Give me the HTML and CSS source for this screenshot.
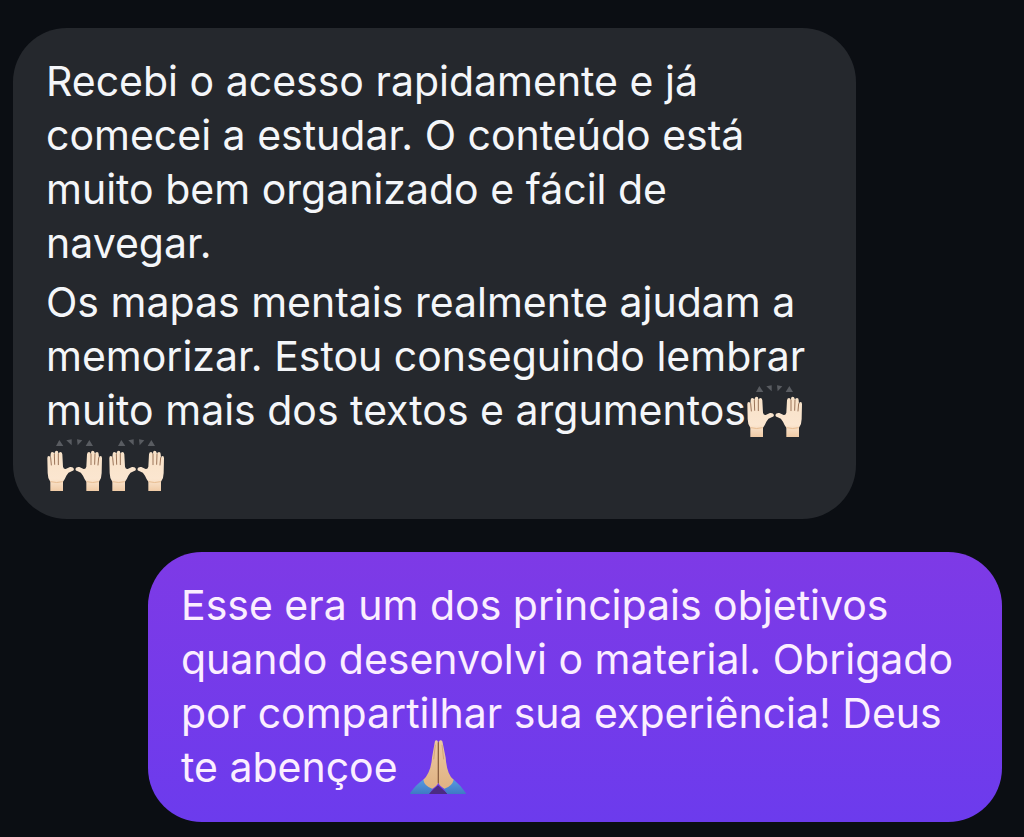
FILE: index.html
```html
<!DOCTYPE html>
<html lang="pt-BR">
<head>
<meta charset="utf-8">
<meta name="viewport" content="width=device-width, initial-scale=1">
<title>Conversa</title>
<link rel="stylesheet" href="styles.css">
</head>
<body>
<svg class="defs" aria-hidden="true">
  <defs>
    <linearGradient id="skin" x1="0" y1="0" x2="0" y2="1">
      <stop offset="0" stop-color="#f8e2c8"/>
      <stop offset=".7" stop-color="#fbe6d0"/>
      <stop offset="1" stop-color="#f0cba6"/>
    </linearGradient>
    <linearGradient id="palm" x1="0" y1="0" x2="0" y2="1">
      <stop offset="0" stop-color="#ecc8a0"/>
      <stop offset="1" stop-color="#dfb283"/>
    </linearGradient>
    <linearGradient id="sleeve" x1="0" y1="0" x2="0" y2="1">
      <stop offset="0" stop-color="#579be0"/>
      <stop offset="1" stop-color="#3f79c4"/>
    </linearGradient>
    <g id="hand">
      <path fill="url(#skin)" d="M46 186 L46 158 Q38 148 38 132 L37 88 Q37 81 41 81 Q46 81 46 88 L47 75 Q47 69 52 69 Q57 69 58 75 L59 71 Q60 65 65 65 Q70 65 70 72 L71 75 Q72 69 76 69 Q81 69 82 76 L84 113 Q86 121 92 120 L105 114 Q115 113 117 120 Q117 125 110 127 Q99 130 94 140 Q89 152 84 158 L84 186 Z"/>
      <path fill="none" stroke="#9b7458" stroke-width="3" stroke-linecap="round" d="M47 86 L49 108 M58 76 L59 106 M70 75 L70 107"/>
      <path fill="none" stroke="#e7bd92" stroke-width="3" d="M47 158 Q65 163 83 158"/>
    </g>
    <symbol id="raised-hands" viewBox="36 24 168 162">
      <g fill="#595c61">
        <path d="M73 33 L85 51 L63 51 Z"/>
        <path d="M94 34 L110 31 L110 49 Z"/>
        <path d="M126 31 L142 34 L128 49 Z"/>
        <path d="M163 33 L174 51 L152 51 Z"/>
      </g>
      <use href="#hand"/>
      <use href="#hand" transform="translate(238 0) scale(-1 1)"/>
    </symbol>
    <symbol id="folded-hands" viewBox="22 30 168 162">
      <path fill="#4b2b83" d="M77 192 L106 166 L136 192 Z"/>
      <path fill="url(#sleeve)" d="M22 190 Q39 165 63 148 Q69 168 91 173 Q86 184 79 192 L24 192 Z"/>
      <path fill="url(#sleeve)" d="M190 190 Q173 165 152 148 Q145 168 122 173 Q128 184 134 192 L188 192 Z"/>
      <path fill="url(#palm)" d="M106 36 Q105 30 100 31 Q96 32 96 38 L88 83 Q86 111 77 128 Q71 141 62 149 Q65 168 89 176 Q104 169 107 157 Z"/>
      <path fill="url(#palm)" d="M108 36 Q110 30 115 31 Q120 32 120 38 L129 83 Q131 111 138 128 Q143 141 153 149 Q149 168 125 176 Q110 169 107 157 Z"/>
      <path fill="none" stroke="#8b6040" stroke-width="4" stroke-linecap="round" d="M107 38 L107 158"/>
      <path fill="none" stroke="#c7976a" stroke-width="2" d="M98 44 L93 88 M118 44 L123 88"/>
    </symbol>
  </defs>
</svg>
<main class="chat">
  <article class="bubble received">
    <p>Recebi o acesso rapidamente e já<br>comecei a estudar. O conteúdo está<br>muito bem organizado e fácil de<br>navegar.</p>
    <p>Os mapas mentais realmente ajudam a<br>memorizar. Estou conseguindo lembrar<br>muito mais dos textos e argumentos<svg class="emoji" role="img" aria-label="Mãos levantadas"><use href="#raised-hands"/></svg><br><svg class="emoji" role="img" aria-label="Mãos levantadas"><use href="#raised-hands"/></svg><svg class="emoji" role="img" aria-label="Mãos levantadas"><use href="#raised-hands"/></svg></p>
  </article>
  <article class="bubble sent">
    <p>Esse era um dos principais objetivos<br>quando desenvolvi o material. Obrigado<br>por compartilhar sua experiência! Deus<br>te abençoe <svg class="emoji" role="img" aria-label="Mãos em oração"><use href="#folded-hands"/></svg></p>
  </article>
</main>
</body>
</html>
```
FILE: styles.css
```css
* {
  box-sizing: border-box;
}

body {
  margin: 0;
  background: #0b0e13;
  font-family: Inter, "Liberation Sans", sans-serif;
  font-size: 41px;
  line-height: 54px;
}

.defs {
  position: absolute;
  width: 0;
  height: 0;
}

.chat {
  display: flex;
  flex-direction: column;
  gap: 33px;
  padding: 28px 22px 15px 13px;
}

.bubble {
  display: flex;
  flex-direction: column;
  gap: 5px;
  padding: 26px 32px 28px 33px;
  border-radius: 54px;
}

.bubble p {
  margin: 0;
}

.received {
  align-self: flex-start;
  width: 100%;
  max-width: 843px;
  background: #25282d;
  color: #f4f6f9;
}

.sent {
  align-self: flex-end;
  width: 100%;
  max-width: 854px;
  background: linear-gradient(#7e3ae6, #6c3bed);
  color: #fbeeff;
}

.emoji {
  width: 56px;
  height: 54px;
  margin: -4px 5px 0 1px;
  vertical-align: -12px;
}
```
